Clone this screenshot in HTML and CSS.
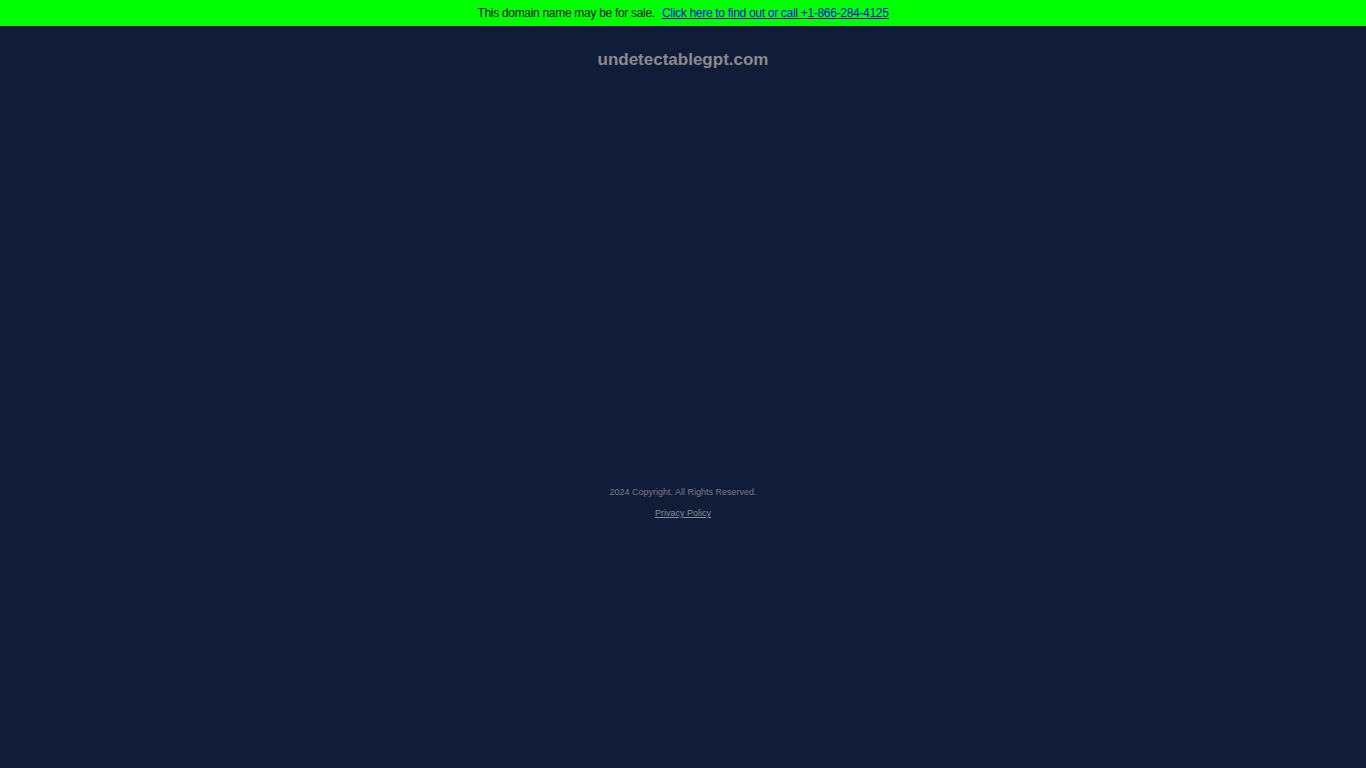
FILE: index.html
```html
<!DOCTYPE html>
<html>
<head>
<meta charset="utf-8">
<title>undetectablegpt.com</title>
<link rel="stylesheet" href="styles.css">
</head>
<body>
<div class="banner">This domain name may be for sale. <a href="#" class="banner-link">Click here to find out or call +1-866-284-4125</a></div>
<div class="page">
  <h1 class="title">undetectablegpt.com</h1>
  <div class="spacer"></div>
  <footer class="footer">
    <p class="copy">2024 Copyright. All Rights Reserved.</p>
    <a href="#" class="privacy">Privacy Policy</a>
  </footer>
</div>
</body>
</html>
```
FILE: styles.css
```css
html, body {
  margin: 0;
  padding: 0;
  height: 100%;
}
body {
  background: #111c38;
  font-family: "Liberation Sans", Arial, sans-serif;
}
.banner {
  background: #00ff00;
  height: 26px;
  line-height: 27px;
  text-align: center;
  font-size: 12px;
  letter-spacing: -0.3px;
  color: #111;
}
.banner-link {
  color: #0000ee;
  margin-left: 4px;
}
.page {
  display: flex;
  flex-direction: column;
  align-items: center;
}
.title {
  margin: 23px 0 0;
  font-size: 17px;
  line-height: 22px;
  font-weight: bold;
  color: #8a8a8f;
}
.spacer {
  height: 415px;
}
.footer {
  display: flex;
  flex-direction: column;
  align-items: center;
  font-size: 9px;
  color: #777b88;
}
.copy {
  margin: 0;
  line-height: 12px;
}
.privacy {
  margin-top: 9px;
  line-height: 12px;
  color: #8a8d99;
}
```
